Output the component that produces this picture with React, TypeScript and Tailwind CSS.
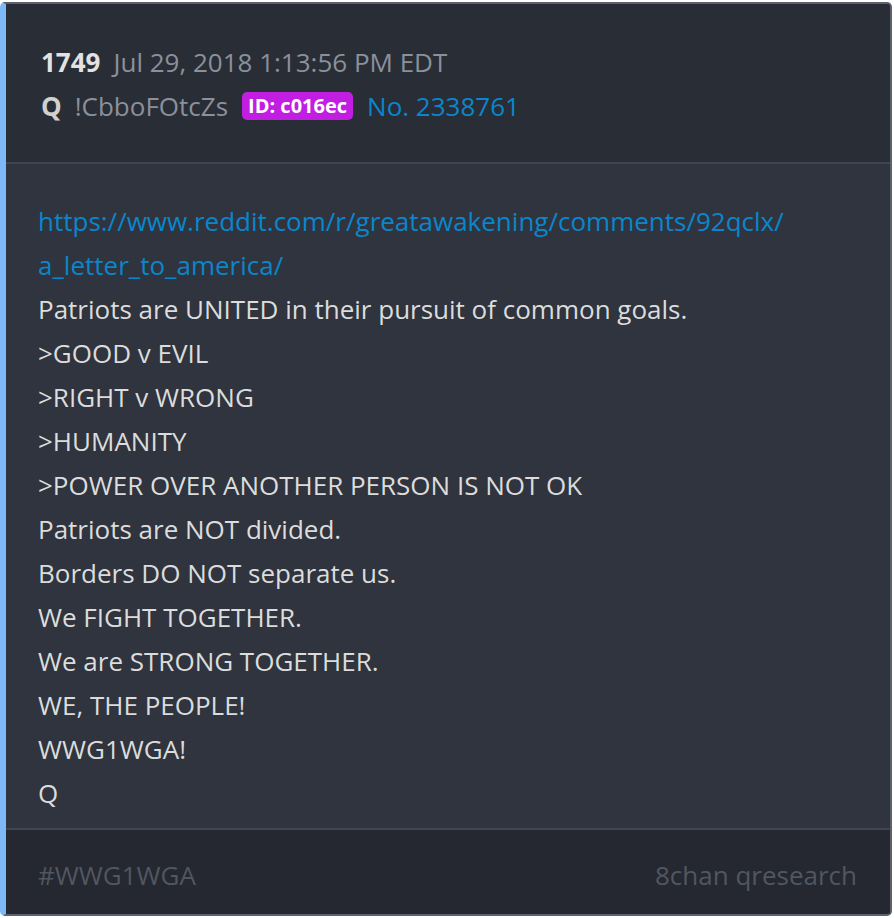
import React from 'react';

const lines = [
  'Patriots are UNITED in their pursuit of common goals.',
  '>GOOD v EVIL',
  '>RIGHT v WRONG',
  '>HUMANITY',
  '>POWER OVER ANOTHER PERSON IS NOT OK',
  'Patriots are NOT divided.',
  'Borders DO NOT separate us.',
  'We FIGHT TOGETHER.',
  'We are STRONG TOGETHER.',
  'WE, THE PEOPLE!',
  'WWG1WGA!',
  'Q',
];

const App: React.FC = () => {
  return (
    <div className="w-[894px] h-[918px] bg-white pt-[2px] pr-[2px] pb-[2px]" style={{ fontFamily: '"Open Sans", "Noto Sans", sans-serif' }}>
      <div className="flex flex-col h-full rounded-[5px] border-2 border-[#5d616b] border-l-[6px] border-l-[#7db9f7] overflow-hidden bg-[#2f343e]">
        {/* header */}
        <div className="bg-[#292d36] pl-[35px] pt-[36px] pb-[34px] border-b-2 border-[#40454e] text-[26px] leading-[44px]">
          <div className="flex items-center">
            <span className="font-bold text-[#e2e2e2]">1749</span>
            <span className="ml-[13px] text-[#8b909b]">Jul 29, 2018 1:13:56 PM EDT</span>
          </div>
          <div className="flex items-center">
            <span className="font-bold text-[#d0d0d0]">Q</span>
            <span className="ml-[13px] text-[#8b909b]">!CbboFOtcZs</span>
            <span className="ml-[14px] bg-[#c11ee1] text-white font-bold text-[20px] leading-[28px] px-[6px] rounded-[5px]">ID: c016ec</span>
            <span className="ml-[14px] text-[#0a86cc]">No. 2338761</span>
          </div>
        </div>
        {/* body */}
        <div className="flex-1 pl-[32px] pt-[35px] text-[26px] leading-[44px] text-[#dcdcdc]">
          <div className="text-[#0a86cc]">https://www.reddit.com/r/greatawakening/comments/92qclx/</div>
          <div className="text-[#0a86cc]">a_letter_to_america/</div>
          {lines.map((l, i) => (
            <div key={i}>{l}</div>
          ))}
        </div>
        {/* footer */}
        <div className="h-[86px] bg-[#252830] border-t-2 border-[#40454e] flex items-center justify-between pl-[32px] pr-[33px] pt-[6px] text-[26px] text-[#515661]">
          <span>#WWG1WGA</span>
          <span>8chan qresearch</span>
        </div>
      </div>
    </div>
  );
};

export default App;
